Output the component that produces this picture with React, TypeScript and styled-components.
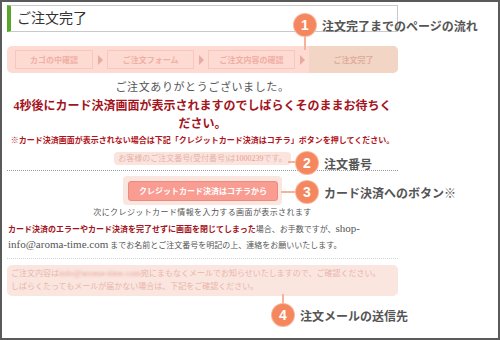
import styled, { createGlobalStyle } from 'styled-components'

const GlobalStyle = createGlobalStyle`
  html, body {
    margin: 0;
    padding: 0;
    background: #fff;
  }
  body {
    font-family: "Liberation Serif", "Noto Sans CJK JP", serif;
  }
`

const SANS = `"Liberation Sans", "Noto Sans CJK JP", sans-serif`

const Frame = styled.div`
  position: relative;
  width: 500px;
  height: 340px;
  box-sizing: border-box;
  border: 2px solid #5a5a5a;
  padding: 3px 0 0 5px;
  background: #fff;
  overflow: hidden;
`

const Column = styled.div`
  width: 391px;
  display: flex;
  flex-direction: column;
`

const TitleBox = styled.div`
  height: 27px;
  box-sizing: border-box;
  border: 1px solid #c9c9c9;
  border-left: 4px solid #5aa62b;
  padding-left: 6px;
  font-size: 14px;
  line-height: 25px;
  color: #333;
`

const StepBar = styled.div`
  margin-top: 14px;
  height: 27px;
  display: flex;
  align-items: center;
  padding-left: 8px;
  background: #fddad2;
  border-radius: 5px;
  overflow: hidden;
`

const Step = styled.div<{ $w: number; $current?: boolean }>`
  width: ${p => p.$w}px;
  height: ${p => (p.$current ? 27 : 19)}px;
  box-sizing: border-box;
  display: flex;
  align-items: center;
  justify-content: center;
  border: ${p => (p.$current ? 'none' : '1px solid #f8c6bc')};
  background: ${p => (p.$current ? '#f3d5c6' : 'transparent')};
  color: ${p => (p.$current ? '#e0ae9c' : '#f1afa4')};
  font-family: ${SANS};
  font-weight: bold;
  font-size: 8px;
`

const Arrow = styled.div`
  width: 14px;
  display: flex;
  justify-content: center;

  &::before {
    content: '';
    border-left: 5px solid #e7aba1;
    border-top: 5px solid transparent;
    border-bottom: 5px solid transparent;
  }
`

const Thanks = styled.p`
  margin: 6px 0 0;
  text-align: center;
  font-size: 11px;
  letter-spacing: 0.6px;
  line-height: 16px;
  color: #555;
`

const Lead = styled.p`
  margin: 2px 0 0;
  padding: 0 4px;
  text-align: center;
  font-size: 12px;
  font-weight: bold;
  line-height: 18px;
  color: #a3141d;
`

const Notice = styled.p`
  margin: 2px 0 0;
  text-align: center;
  font-size: 8px;
  font-weight: bold;
  line-height: 12px;
  color: #b0141c;
`

const Center = styled.div<{ $mt: number }>`
  margin-top: ${p => p.$mt}px;
  display: flex;
  justify-content: center;
`

const OrderPill = styled.div`
  height: 13px;
  padding: 0 4px;
  border-radius: 4px;
  background: #fbe4de;
  color: #e5b3aa;
  font-size: 8px;
  line-height: 13px;
  white-space: nowrap;

  em {
    font-style: normal;
    color: #e9998f;
  }
`

const Rule = styled.hr<{ $mt: number; $light?: boolean }>`
  margin: ${p => p.$mt}px 0 0;
  border: none;
  border-top: 1px dotted ${p => (p.$light ? '#d2d2d2' : '#9a9a9a')};
  height: 0;
`

const ButtonWrap = styled.div`
  padding: 4px 4px 4px 5px;
  border-radius: 4px;
  background: #fbe5df;
`

const PayButton = styled.button`
  width: 150px;
  height: 20px;
  box-sizing: border-box;
  border: 1px solid #ef887d;
  border-radius: 3px;
  background: #f99c92;
  color: #fff;
  font-family: ${SANS};
  font-weight: bold;
  font-size: 8px;
  padding: 0;
  cursor: pointer;
`

const Hint = styled.p`
  margin: 2px 0 0;
  text-align: center;
  font-size: 8px;
  letter-spacing: 0.4px;
  line-height: 12px;
  color: #555;
`

const Para = styled.p`
  margin: 3px 0 0;
  padding-left: 1px;
  font-size: 8px;
  line-height: 16px;
  color: #555;

  strong,
  span {
    line-height: 10px;
  }
  strong {
    color: #a3141d;
  }
  .latin {
    font-size: 11px;
  }
`

const InfoBox = styled.div`
  margin-top: 6px;
  padding: 2px 4px 3px;
  border-radius: 5px;
  background: #fbe5df;
  color: #e8b6ac;
  font-size: 8px;
  line-height: 13px;

  .blur {
    font-size: 9px;
    line-height: 10px;
    color: #e3a89e;
    filter: blur(1.2px);
  }
`

const Callout = styled.div<{ $x: number; $y: number }>`
  position: absolute;
  left: ${p => p.$x - 2}px;
  top: ${p => p.$y - 2}px;
  display: flex;
  align-items: center;
  gap: 6px;
  white-space: nowrap;
`

const Badge = styled.span`
  width: 22px;
  height: 22px;
  border-radius: 50%;
  background: #f5875f;
  box-shadow: 0 0 0 1px #f9b79e;
  color: #fff;
  font-family: "Liberation Sans", sans-serif;
  font-weight: bold;
  font-size: 14px;
  display: flex;
  align-items: center;
  justify-content: center;
`

const Label = styled.span`
  font-family: "Noto Sans CJK JP", sans-serif;
  font-weight: bold;
  font-size: 12px;
  color: #555;
`

const Leader = styled.div<{ $x: number; $y: number; $w: number; $h: number }>`
  position: absolute;
  left: ${p => p.$x - 2}px;
  top: ${p => p.$y - 2}px;
  width: ${p => p.$w}px;
  height: ${p => p.$h}px;
  background: #f8b29b;
`

const steps = [
  { name: 'カゴの中確認', w: 79 },
  { name: 'ご注文フォーム', w: 88 },
  { name: 'ご注文内容の確認', w: 88 },
]

const callouts = [
  { n: 1, x: 294, y: 14, text: '注文完了までのページの流れ' },
  { n: 2, x: 296, y: 152, text: '注文番号' },
  { n: 3, x: 296, y: 181, text: 'カード決済へのボタン※' },
  { n: 4, x: 272, y: 304, text: '注文メールの送信先' },
]

export default function App() {
  return (
    <>
      <GlobalStyle />
      <Frame>
        <Column>
          <TitleBox>ご注文完了</TitleBox>

          <StepBar>
            {steps.map(s => (
              <>
                <Step key={s.name} $w={s.w}>{s.name}</Step>
                <Arrow key={s.name + '-arrow'} />
              </>
            ))}
            <Step $w={90} $current>ご注文完了</Step>
          </StepBar>

          <Thanks>ご注文ありがとうございました。</Thanks>
          <Lead>4秒後にカード決済画面が表示されますのでしばらくそのままお待ちください。</Lead>
          <Notice>※カード決済画面が表示されない場合は下記「クレジットカード決済はコチラ」ボタンを押してください。</Notice>

          <Center $mt={5}>
            <OrderPill>お客様のご注文番号(受付番号)は<em>1000239</em>です。</OrderPill>
          </Center>

          <Rule $mt={5} />

          <Center $mt={5}>
            <ButtonWrap>
              <PayButton type="button">クレジットカード決済はコチラから</PayButton>
            </ButtonWrap>
          </Center>

          <Hint>次にクレジットカード情報を入力する画面が表示されます</Hint>

          <Para>
            <strong>カード決済のエラーやカード決済を完了せずに画面を閉じてしまった</strong>
            場合、お手数ですが、<span className="latin">shop-</span><span className="latin">info@aroma-time.com</span> までお名前とご注文番号を明記の上、連絡をお願いいたします。
          </Para>

          <Rule $mt={4} $light />

          <InfoBox>
            ご注文内容は<span className="blur">info@aroma-time.com</span>宛にまもなくメールでお知らせいたしますので、ご確認ください。
            <br />
            しばらくたってもメールが届かない場合は、下記をご確認ください。
          </InfoBox>
        </Column>

        <Leader $x={304} $y={36} $w={2} $h={14} />
        <Leader $x={288} $y={161} $w={8} $h={2} />
        <Leader $x={281} $y={191} $w={15} $h={2} />
        <Leader $x={282} $y={294} $w={2} $h={10} />

        {callouts.map(c => (
          <Callout key={c.n} $x={c.x} $y={c.y}>
            <Badge>{c.n}</Badge>
            <Label>{c.text}</Label>
          </Callout>
        ))}
      </Frame>
    </>
  )
}
